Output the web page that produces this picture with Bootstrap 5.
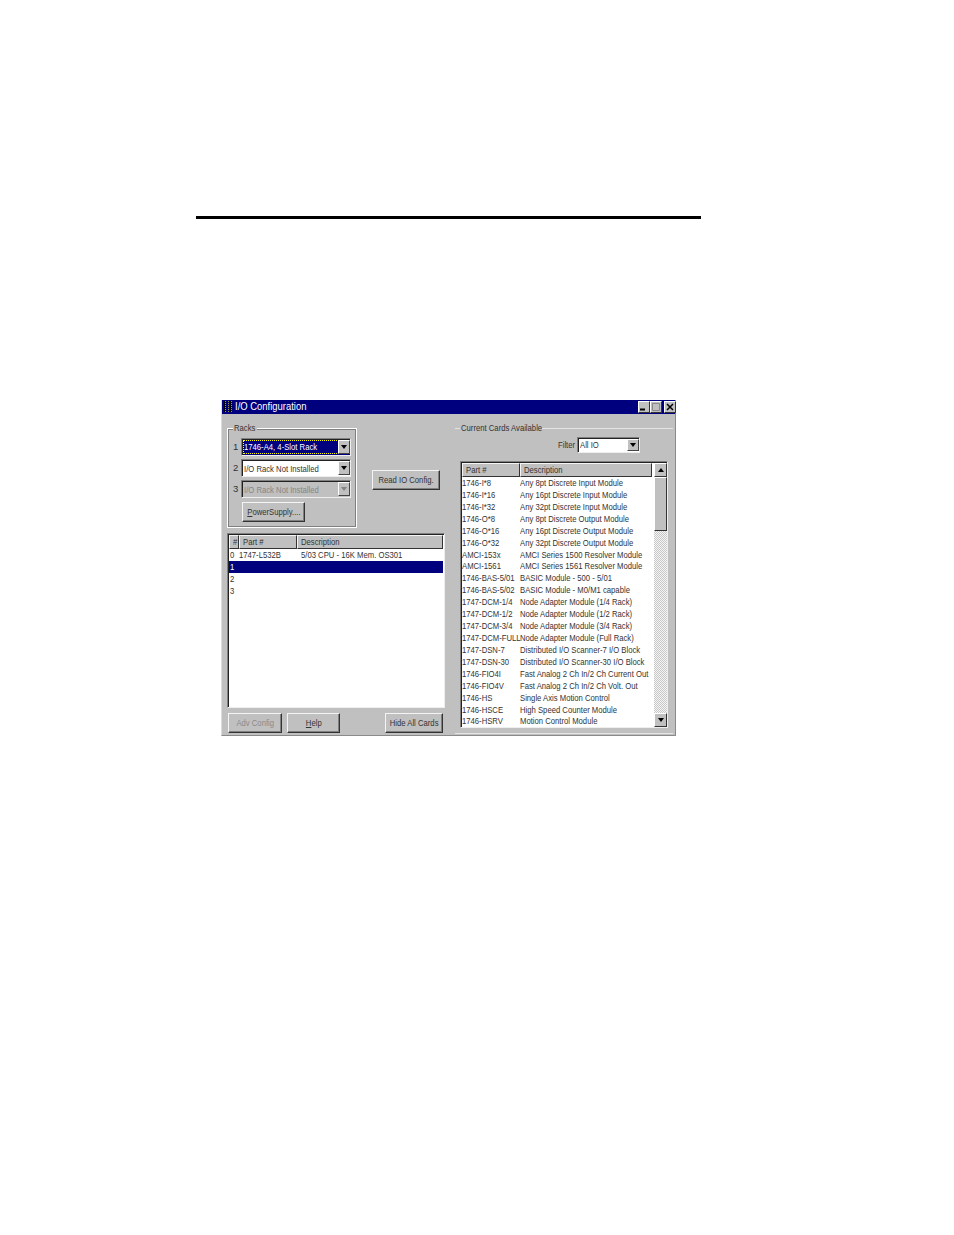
<!DOCTYPE html>
<html lang="en">
<head>
<meta charset="utf-8">
<title>I/O Configuration</title>
<link href="https://cdn.jsdelivr.net/npm/bootstrap@5.3.0/dist/css/bootstrap.min.css" rel="stylesheet">
<style>
html,body{background:#fff;margin:0}
.sheet{width:954px;height:1235px;padding-top:216px;padding-left:196px;box-sizing:border-box;overflow:hidden}
.rule{width:505px;height:3px;background:#000;margin-bottom:181px}
.dlg,.dlg *{font-family:"Liberation Sans",Arial,sans-serif;font-size:9.5px;line-height:12px;color:#333;box-sizing:border-box}
.tx{display:inline-block;white-space:nowrap;transform:scaleX(.81);transform-origin:0 50%;flex:none}
.dlg{width:455px;height:336px;margin-left:25px;background:#c0c0c0;border:1px solid #8a8a8a;border-left-color:#dcdcdc;border-top:0}
.ttl{height:14px;background:#00007f;padding:0 0 1px 1px}
.dlg .ttl-txt{color:#fff;font-size:10.5px;line-height:13px;transform:scaleX(.9)}
.ttl-w{width:75px;flex:none;margin-left:1px}
.cap{width:12px;height:12px;background:#c0c0c0;border:1px solid;border-color:#fff #333 #333 #fff}
.cap svg{display:block}
.cap-x{margin:0 -1px 0 2px}
.cols{padding-left:5px}
.leftc{width:218px;padding-top:14px}
.rightc{width:219px;margin-left:10px;padding-top:14px}
.grp{border:1px solid #fff;outline:1px solid #808080;outline-offset:-2px;position:relative}
.grp-a{width:130px;height:100px;padding:9px 0 0 5px}
.grp-b{width:218px;height:306px;border-left:0;border-right:0;border-bottom:1px solid #e4e4e4;outline:0;border-top:1px solid #e4e4e4;padding:8px 6px 0 5px}
.lg{position:absolute;top:-7px;left:5px;background:#c0c0c0;padding:0 1px}
.lg-a{width:24px}
.lg-b{width:82px}
.rack{height:18px;margin-bottom:3px}
.num{width:8px;flex:none;padding-top:3px}
.cmb{width:110px;height:18px;background:#fff;border:1px solid;border-color:#808080 #eee #eee #808080;box-shadow:inset 1px 1px 0 #222;padding:3px 0 0 2px;position:relative}
.cmb-on{background:#00007f}
.dlg .cmb-on .sel{display:block;width:96px;outline:1px dotted #ff0;outline-offset:0;height:12px;margin-top:-1px;padding-top:0}
.dlg .cmb-on .tx{color:#fff}
.cmb-off{background:#c0c0c0}
.dlg .cmb-off .tx{color:#858585}
.arr{position:absolute;right:0;top:1px;width:12px;height:14px;background:#c0c0c0;border:1px solid;border-color:#fff #444 #444 #fff;display:flex;align-items:center;justify-content:center}
.arr i{display:block;width:0;height:0;border:3px solid transparent;border-top:4px solid #000;border-bottom:0}
.arr-off i{border-top-color:#858585}
.wbtn{height:20px;background:#c0c0c0;border:1px solid;border-color:#f4f4f4 #333 #333 #f4f4f4;box-shadow:inset -1px -1px 0 #808080;display:flex;align-items:center;justify-content:center;padding:0 0 1px}
.wbtn .tx{transform-origin:50% 50%}
.dlg .wbtn-off .tx{color:#8a8a8a}
.b-ps{width:63px;height:20px;margin:4px 0 0 9px}
.b-rd{width:68px;margin:42px 0 0 15px}
u{text-underline-offset:1px}
.lst{background:#fff;border:1px solid;border-color:#808080 #eee #eee #808080;box-shadow:inset 1px 1px 0 #222;padding:1px}
.lst-l{width:218px;height:175px;margin-top:5px}
.lst-r{width:208px;height:267px;margin-top:8px;position:relative}
.hd{height:14px;background:#c0c0c0}
.hd>div{height:14px;border:1px solid;border-color:#f4f4f4 #333 #333 #f4f4f4;padding-left:3px;line-height:11px}
.rw{height:12px;white-space:nowrap}
.rw-r{height:11.93px}
.rw-on{background:#00007f}
.dlg .rw-on .tx{color:#fff}
.c0{width:10px;flex:none;padding-left:1px}
.c1{width:58px;flex:none}
.c2{flex:1 1 0}
.d1{width:62px;flex:none}
.r1{width:58px;flex:none;padding-left:0}
.bot{margin-top:5px}
.b-ac{width:54px;margin-left:1px;height:20px}
.b-hp{width:53px;margin-left:5px;height:20px}
.b-hd{width:58px;margin-left:45px;height:20px}
.flt{height:16px;margin-left:98px}
.flt-l{width:19px;flex:none;margin-top:-1px}
.cmb-f{width:63px;height:16px;padding-top:1px}
.cmb-f .arr{height:12px}
.hd-r{margin-right:14px}
.sb{position:absolute;right:0;top:1px;bottom:0;width:13px;display:flex;flex-direction:column;background:#e0e0e0 repeating-conic-gradient(#c8c8c8 0 25%,#f4f4f4 0 50%) 0 0/2px 2px}
.sb-b{height:14px;background:#c0c0c0;border:1px solid;border-color:#fff #333 #333 #fff;display:flex;align-items:center;justify-content:center;flex:none}
.sb-b i{display:block;width:0;height:0;border:3px solid transparent;border-top:0;border-bottom:4px solid #000}
.sb-b.dn i{border-top:4px solid #000;border-bottom:0}
.sb-t{height:54px;background:#c0c0c0;border:1px solid;border-color:#fff #333 #333 #fff;flex:none}
.sb-g{flex:1}
.ico{width:11px;height:13px;display:block;flex:none}
</style>
</head>
<body>
<div class="sheet">
  <div class="rule"></div>
  <div class="dlg">
    <div class="ttl d-flex align-items-center">
      <svg class="ico" viewBox="0 0 11 13"><g stroke="#000"><path d="M1.5 1v11M4.5 1v11M7.5 1v11"/></g><g stroke="#9a9a40" stroke-dasharray="1 1"><path d="M2.5 1v11M5.5 1v11M8.5 1v11"/></g></svg>
      <div class="ttl-w"><span class="tx ttl-txt">I/O Configuration</span></div>
      <div class="ms-auto d-flex">
        <div class="cap"><svg width="10" height="10" viewBox="0 0 10 10"><path d="M1 7.5h5" stroke="#000" stroke-width="2"/></svg></div>
        <div class="cap"><svg width="10" height="10" viewBox="0 0 10 10"><path d="M1.5 1.5h7v7h-7z" fill="none" stroke="#8a8a8a"/></svg></div>
        <div class="cap cap-x"><svg width="10" height="10" viewBox="0 0 10 10"><path d="M2 2l6 6M8 2l-6 6" stroke="#000" stroke-width="1.5"/></svg></div>
      </div>
    </div>
    <div class="cols d-flex">
      <div class="leftc">
        <div class="d-flex">
          <div class="grp grp-a">
            <div class="lg lg-a"><span class="tx">Racks</span></div>
            <div class="rack d-flex"><span class="num">1</span><div class="cmb cmb-on"><div class="sel"><span class="tx">1746-A4, 4-Slot Rack</span></div><div class="arr"><i></i></div></div></div>
            <div class="rack d-flex"><span class="num">2</span><div class="cmb"><span class="tx">I/O Rack Not Installed</span><div class="arr"><i></i></div></div></div>
            <div class="rack d-flex"><span class="num">3</span><div class="cmb cmb-off"><span class="tx">I/O Rack Not Installed</span><div class="arr arr-off"><i></i></div></div></div>
            <div class="wbtn b-ps"><span class="tx"><u>P</u>owerSupply....</span></div>
          </div>
          <div class="wbtn b-rd"><span class="tx">Read IO Config.</span></div>
        </div>
        <div class="lst lst-l">
          <div class="hd d-flex"><div class="c0"><span class="tx">#</span></div><div class="c1"><span class="tx">Part #</span></div><div class="c2"><span class="tx">Description</span></div></div>
          <div class="rw d-flex"><div class="c0"><span class="tx">0</span></div><div class="d1"><span class="tx">1747-L532B</span></div><div class="c2"><span class="tx">5/03 CPU - 16K Mem. OS301</span></div></div>
          <div class="rw rw-on d-flex"><div class="c0"><span class="tx">1</span></div></div>
          <div class="rw d-flex"><div class="c0"><span class="tx">2</span></div></div>
          <div class="rw d-flex"><div class="c0"><span class="tx">3</span></div></div>
        </div>
        <div class="bot d-flex">
          <div class="wbtn wbtn-off b-ac"><span class="tx">Adv Config</span></div>
          <div class="wbtn b-hp"><span class="tx"><u>H</u>elp</span></div>
          <div class="wbtn b-hd"><span class="tx">Hide All Cards</span></div>
        </div>
      </div>
      <div class="rightc">
        <div class="grp grp-b">
          <div class="lg lg-b"><span class="tx">Current Cards Available</span></div>
          <div class="flt d-flex align-items-center"><div class="flt-l"><span class="tx">Filter</span></div><div class="cmb cmb-f"><span class="tx">All IO</span><div class="arr"><i></i></div></div></div>
          <div class="lst lst-r">
            <div class="hd hd-r d-flex"><div class="c1"><span class="tx">Part #</span></div><div class="c2"><span class="tx">Description</span></div></div>
            <div id="rows"></div>
            <div class="sb"><div class="sb-b"><i></i></div><div class="sb-t"></div><div class="sb-g"></div><div class="sb-b dn"><i></i></div></div>
          </div>
        </div>
      </div>
    </div>
  </div>
</div>
<script>
var d=[["1746-I*8","Any 8pt  Discrete Input Module"],["1746-I*16","Any 16pt Discrete Input Module"],["1746-I*32","Any 32pt Discrete Input Module"],["1746-O*8","Any 8pt Discrete Output Module"],["1746-O*16","Any 16pt Discrete Output Module"],["1746-O*32","Any 32pt Discrete Output Module"],["AMCI-153x","AMCI Series 1500 Resolver Module"],["AMCI-1561","AMCI Series 1561 Resolver Module"],["1746-BAS-5/01","BASIC Module - 500 - 5/01"],["1746-BAS-5/02","BASIC Module - M0/M1 capable"],["1747-DCM-1/4","Node Adapter Module (1/4 Rack)"],["1747-DCM-1/2","Node Adapter Module (1/2 Rack)"],["1747-DCM-3/4","Node Adapter Module (3/4 Rack)"],["1747-DCM-FULL","Node Adapter Module (Full Rack)"],["1747-DSN-7","Distributed I/O Scanner-7 I/O Block"],["1747-DSN-30","Distributed I/O Scanner-30 I/O Block"],["1746-FIO4I","Fast Analog 2 Ch In/2 Ch Current Out"],["1746-FIO4V","Fast Analog 2 Ch In/2 Ch Volt. Out"],["1746-HS","Single Axis Motion Control"],["1746-HSCE","High Speed Counter Module"],["1746-HSRV","Motion Control Module"]];
document.getElementById('rows').innerHTML=d.map(function(r){return '<div class="rw rw-r d-flex"><div class="r1"><span class="tx">'+r[0]+'</span></div><div><span class="tx">'+r[1]+'</span></div></div>'}).join('');
</script>
<script src="https://cdn.jsdelivr.net/npm/bootstrap@5.3.0/dist/js/bootstrap.bundle.min.js"></script>
</body>
</html>
